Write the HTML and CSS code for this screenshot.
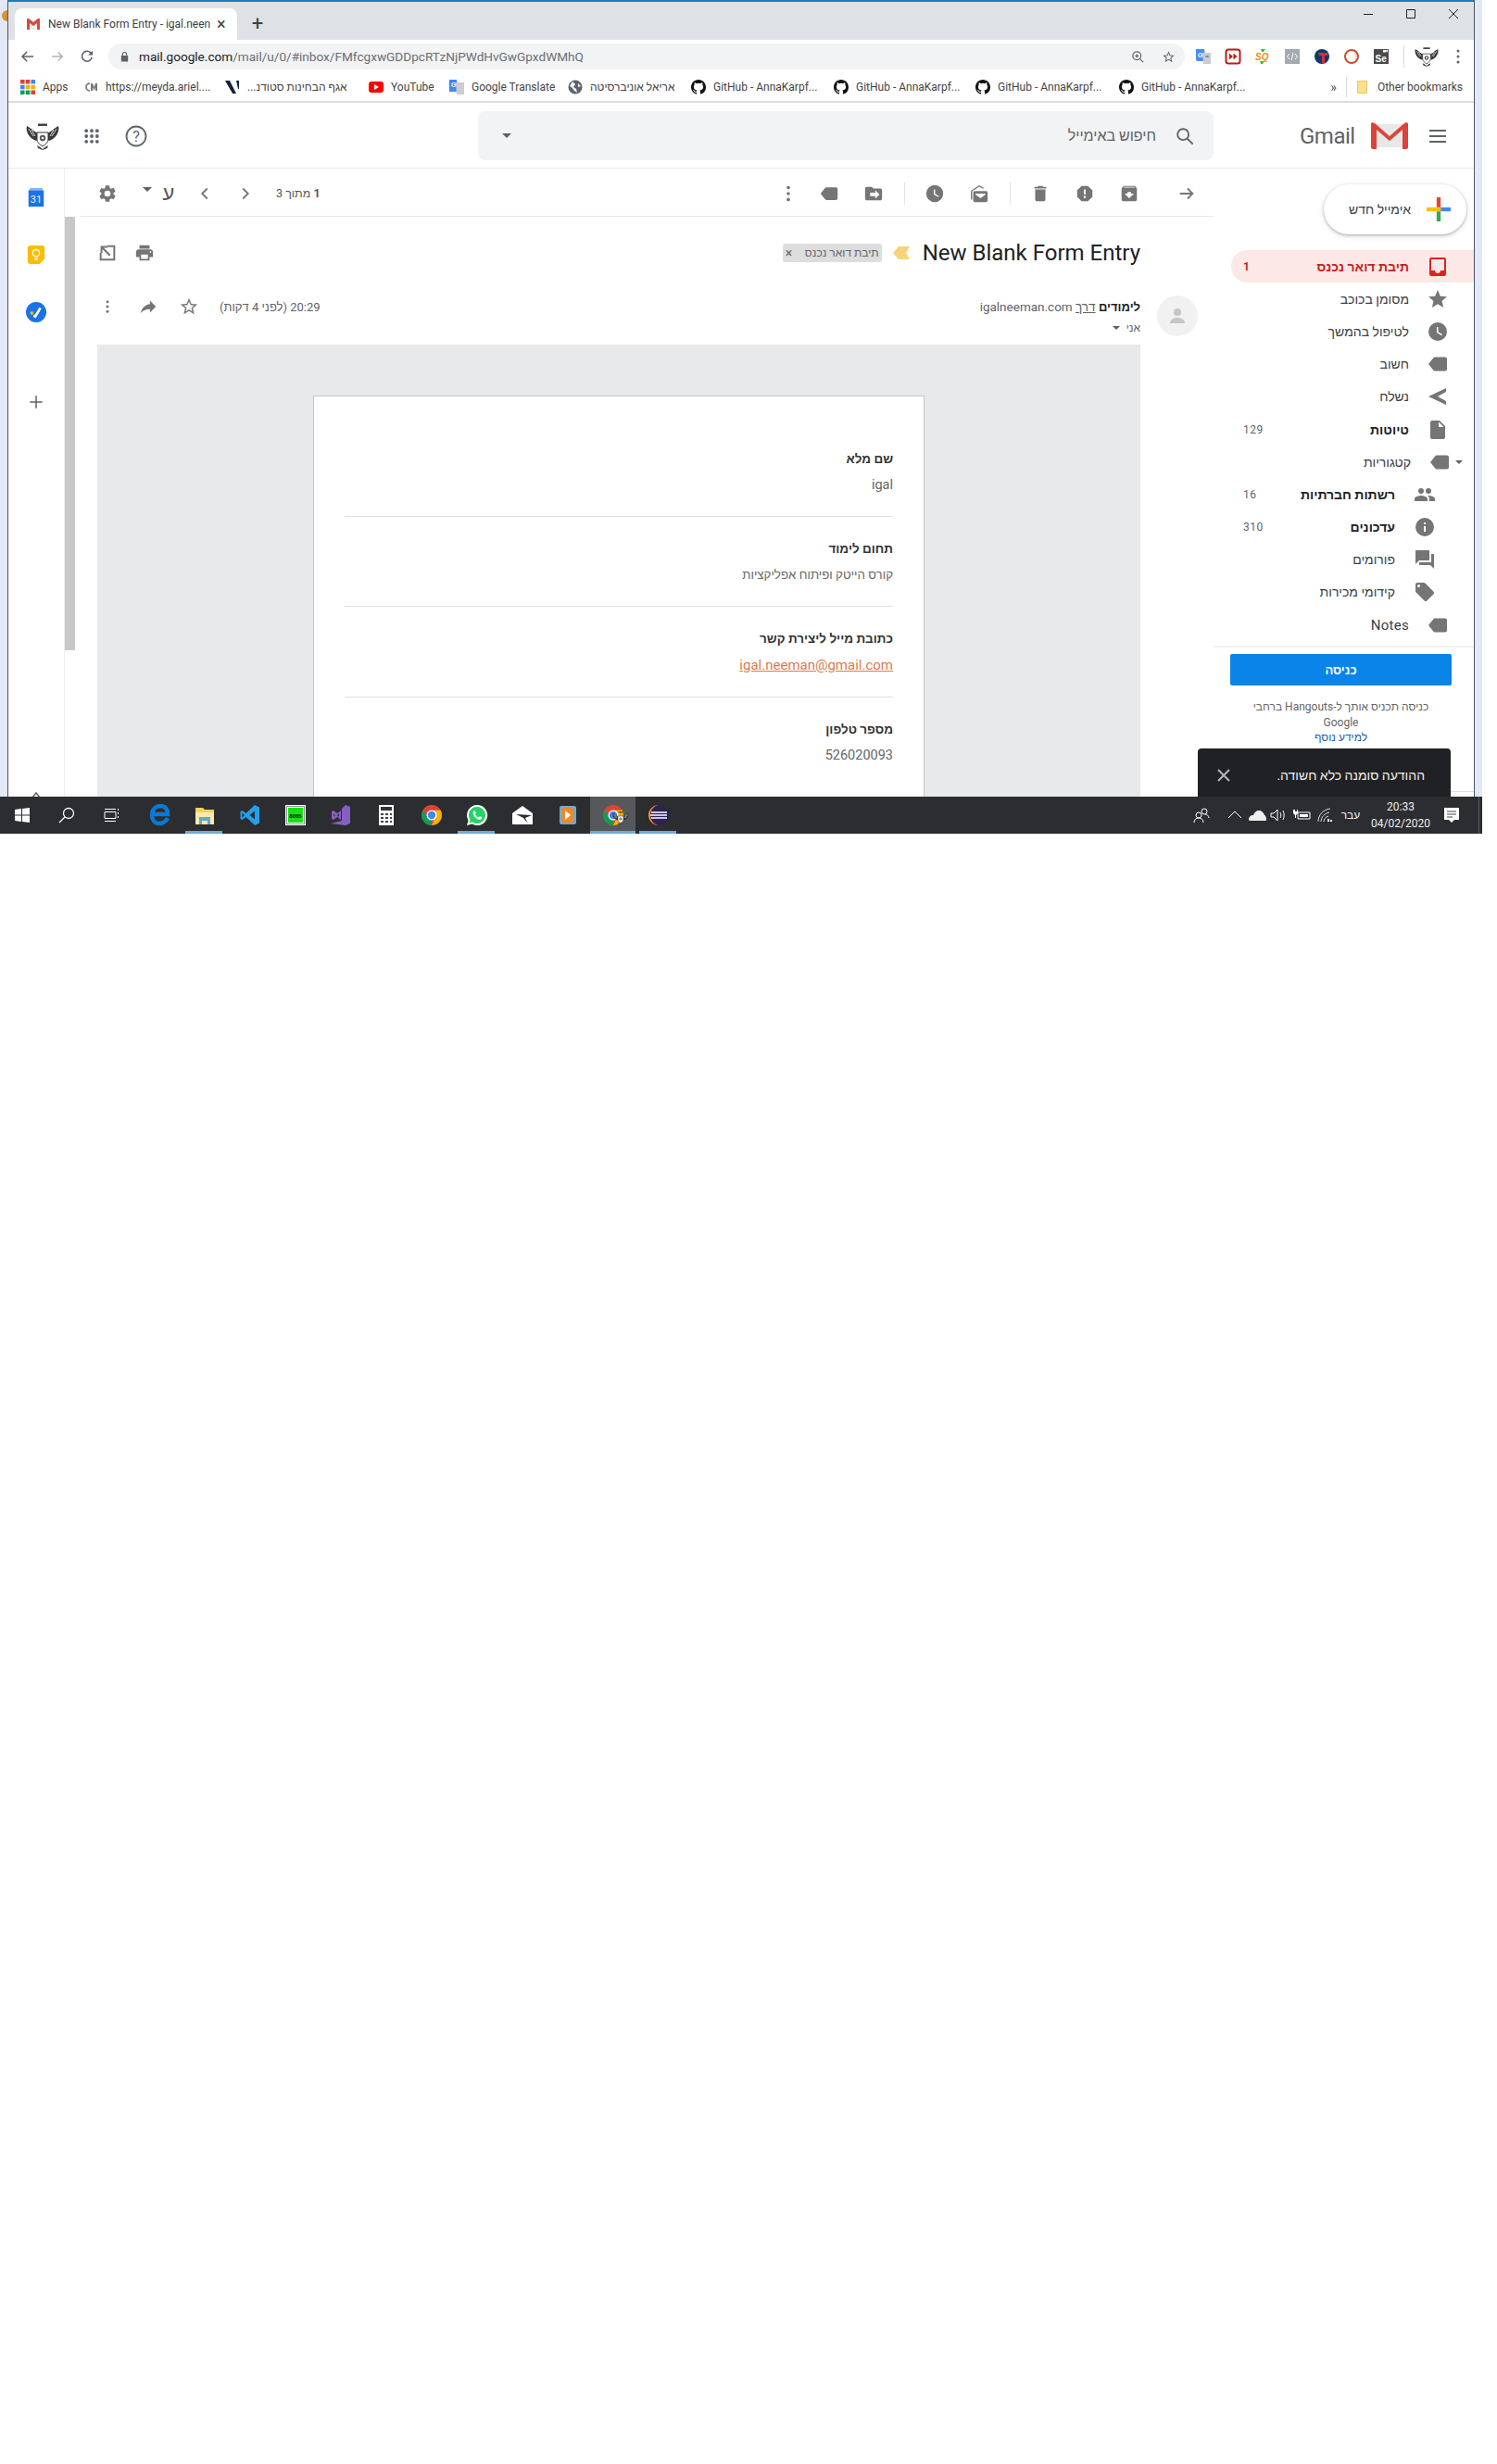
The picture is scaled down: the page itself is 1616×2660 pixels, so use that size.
FILE: index.html
```html
<!DOCTYPE html>
<html lang="he">
<head>
<meta charset="utf-8">
<title>New Blank Form Entry</title>
<link rel="stylesheet" href="styles.css">
</head>
<body>
<svg class="defs" width="0" height="0">
  <symbol id="i-gear" viewBox="0 0 24 24"><path fill="currentColor" d="M19.14 12.94c.04-.3.06-.61.06-.94s-.02-.64-.07-.94l2.03-1.58a.49.49 0 0 0 .12-.61l-1.92-3.32a.49.49 0 0 0-.59-.22l-2.39.96a7 7 0 0 0-1.62-.94l-.36-2.54a.48.48 0 0 0-.48-.41h-3.84c-.24 0-.43.17-.47.41l-.36 2.54c-.59.24-1.13.57-1.62.94l-2.39-.96a.49.49 0 0 0-.59.22L2.74 8.87c-.12.21-.08.47.12.61l2.03 1.58c-.05.3-.09.63-.09.94s.02.64.07.94l-2.03 1.58a.49.49 0 0 0-.12.61l1.92 3.32c.12.22.37.29.59.22l2.39-.96c.5.38 1.03.7 1.62.94l.36 2.54c.05.24.24.41.48.41h3.84c.24 0 .44-.17.47-.41l.36-2.54c.59-.24 1.13-.56 1.62-.94l2.39.96c.22.08.47 0 .59-.22l1.92-3.32a.48.48 0 0 0-.12-.61l-2.01-1.58zM12 15.6a3.6 3.6 0 1 1 0-7.2 3.6 3.6 0 0 1 0 7.2z"/></symbol>
  <symbol id="i-label" viewBox="0 0 24 24"><path fill="currentColor" d="M2 12 7.200 5.400c.4-.5 1-.9 1.700-.9H20c1.100 0 2 .9 2 2v11c0 1.100-.9 2-2 2H8.900c-.7 0-1.300-.4-1.700-.9z"/></symbol>
  <symbol id="i-folder" viewBox="0 0 24 24"><path fill="currentColor" d="M20 6h-8l-2-2H4c-1.100 0-2 .9-2 2v12c0 1.100.9 2 2 2h16c1.100 0 2-.9 2-2V8c0-1.100-.9-2-2-2zm-6 12v-3H8v-4h6V8l5 5z"/></symbol>
  <symbol id="i-clock" viewBox="0 0 24 24"><path fill="currentColor" d="M12 2a10 10 0 1 0 0 20 10 10 0 0 0 0-20zm4.200 14.200L11 13V7h1.500v5.200l4.500 2.700z"/></symbol>
  <symbol id="i-mailopen" viewBox="0 0 24 24"><path fill="none" stroke="currentColor" stroke-width="1.500" d="M3 9 12 3l5 2.500M3 9v10"/><path fill="currentColor" d="M7 9h13c1.100 0 2 .9 2 2v9c0 1.100-.9 2-2 2H7c-1.100 0-2-.9-2-2v-9c0-1.100.9-2 2-2zm1 3 5.500 4.500L19 12"/><path fill="none" stroke="#fff" stroke-width="1.600" d="m8 12.500 5.500 4 5.500-4"/></symbol>
  <symbol id="i-trash" viewBox="0 0 24 24"><path fill="currentColor" d="M6 19c0 1.100.9 2 2 2h8c1.100 0 2-.9 2-2V7H6v12zM19 4h-3.500l-1-1h-5l-1 1H5v2h14V4z"/></symbol>
  <symbol id="i-spam" viewBox="0 0 24 24"><path fill="currentColor" d="M15.730 3H8.270L3 8.270v7.460L8.270 21h7.460L21 15.730V8.270L15.730 3zM12 17.300c-.72 0-1.300-.58-1.300-1.300 0-.72.58-1.300 1.300-1.300.72 0 1.300.58 1.300 1.300 0 .72-.58 1.300-1.300 1.300zm1-4.300h-2V7h2v6z"/></symbol>
  <symbol id="i-archive" viewBox="0 0 24 24"><path fill="currentColor" d="M20.540 5.230l-1.390-1.680C18.880 3.210 18.470 3 18 3H6c-.47 0-.88.21-1.160.55L3.460 5.230C3.170 5.570 3 6.020 3 6.500V19c0 1.100.9 2 2 2h14c1.100 0 2-.9 2-2V6.500c0-.48-.17-.93-.46-1.270zM12 17.500 6.500 12H10v-2h4v2h3.500L12 17.500zM5.120 5l.81-1h12l.94 1H5.120z"/></symbol>
  <symbol id="i-arrow" viewBox="0 0 24 24"><path fill="none" stroke="currentColor" stroke-width="2" d="M4 12h15M13 6l6 6-6 6"/></symbol>
  <symbol id="i-back" viewBox="0 0 24 24"><path fill="none" stroke="currentColor" stroke-width="2" d="M20 12H5M11 5l-7 7 7 7"/></symbol>
  <symbol id="i-expand" viewBox="0 0 24 24"><path fill="none" stroke="currentColor" stroke-width="2.200" d="M12 4h8v16H4v-8M5 5l10 10M5 12V5h7"/></symbol>
  <symbol id="i-print" viewBox="0 0 24 24"><path fill="currentColor" d="M19 8H5c-1.660 0-3 1.340-3 3v6h4v4h12v-4h4v-6c0-1.660-1.340-3-3-3zm-3 11H8v-5h8v5zm3-7c-.55 0-1-.45-1-1s.45-1 1-1 1 .45 1 1-.45 1-1 1zm-1-9H6v4h12V3z"/></symbol>
  <symbol id="i-forward" viewBox="0 0 24 24"><path fill="currentColor" d="M14 9V5l7 7-7 7v-4.100c-5 0-8.500 1.600-11 5.100 1-5 4-10 11-11z"/></symbol>
  <symbol id="i-staro" viewBox="0 0 24 24"><path fill="currentColor" d="M22 9.240l-7.190-.62L12 2 9.190 8.630 2 9.240l5.460 4.730L5.820 21 12 17.270 18.180 21l-1.630-7.030L22 9.240zM12 15.400l-3.760 2.270 1-4.280-3.320-2.880 4.380-.38L12 6.100l1.710 4.040 4.380.38-3.320 2.880 1 4.280L12 15.400z"/></symbol>
  <symbol id="i-star" viewBox="0 0 24 24"><path fill="currentColor" d="M12 17.270 18.180 21l-1.640-7.030L22 9.240l-7.190-.61L12 2 9.190 8.630 2 9.240l5.460 4.730L5.820 21z"/></symbol>
  <symbol id="i-inbox" viewBox="0 0 24 24"><path fill="currentColor" d="M19 2H5C3.900 2 3 2.900 3 4v16c0 1.100.9 2 2 2h14c1.100 0 2-.9 2-2V4c0-1.100-.9-2-2-2zm0 14h-4c0 1.700-1.300 3-3 3s-3-1.300-3-3H5V4h14z"/></symbol>
  <symbol id="i-send" viewBox="0 0 24 24"><path fill="currentColor" d="M21 3 2 12l19 9v-4l-9-5 9-5z"/></symbol>
  <symbol id="i-doc" viewBox="0 0 24 24"><path fill="currentColor" d="M6 2C4.900 2 4 2.900 4 4v16c0 1.100.9 2 2 2h12c1.100 0 2-.9 2-2V8l-6-6zm7 7V3.500L18.500 9z"/></symbol>
  <symbol id="i-people" viewBox="0 0 24 24"><path fill="currentColor" d="M16 11a3 3 0 1 0 0-6 3 3 0 0 0 0 6zm-8 0a3 3 0 1 0 0-6 3 3 0 0 0 0 6zm0 2c-2.330 0-7 1.170-7 3.500V19h14v-2.500C15 14.170 10.330 13 8 13zm8 0c-.29 0-.62.02-.97.05 1.160.84 1.970 1.970 1.970 3.450V19h6v-2.500c0-2.330-4.670-3.500-7-3.500z"/></symbol>
  <symbol id="i-info" viewBox="0 0 24 24"><path fill="currentColor" d="M12 2a10 10 0 1 0 0 20 10 10 0 0 0 0-20zm1 15h-2v-6h2zm0-8h-2V7h2z"/></symbol>
  <symbol id="i-forum" viewBox="0 0 24 24"><path fill="currentColor" d="M21 6h-2v9H6v2c0 .55.45 1 1 1h11l4 4V7c0-.55-.45-1-1-1zm-4 6V3c0-.55-.45-1-1-1H3c-.55 0-1 .45-1 1v14l4-4h10c.55 0 1-.45 1-1z"/></symbol>
  <symbol id="i-tag" viewBox="0 0 24 24"><path fill="currentColor" d="m21.410 11.580-9-9C12.050 2.220 11.550 2 11 2H4c-1.100 0-2 .9-2 2v7c0 .55.22 1.050.59 1.420l9 9c.36.36.86.58 1.410.58s1.050-.22 1.410-.59l7-7c.37-.36.59-.86.59-1.410s-.23-1.060-.59-1.420zM5.500 7a1.500 1.500 0 1 1 0-3 1.500 1.500 0 0 1 0 3z"/></symbol>
  <symbol id="i-github" viewBox="0 0 16 16"><path fill="currentColor" d="M8 0C3.580 0 0 3.580 0 8c0 3.540 2.290 6.530 5.470 7.590.4.07.55-.17.55-.38 0-.19-.01-.82-.01-1.490-2.010.37-2.530-.49-2.690-.94-.09-.23-.48-.94-.82-1.130-.28-.15-.68-.52-.01-.53.63-.01 1.080.58 1.230.82.72 1.210 1.870.87 2.330.66.07-.52.28-.87.51-1.070-1.780-.2-3.640-.89-3.640-3.950 0-.87.31-1.590.82-2.150-.08-.2-.36-1.020.08-2.120 0 0 .67-.21 2.200.82a7.420 7.420 0 0 1 4 0c1.530-1.040 2.200-.82 2.200-.82.44 1.100.16 1.920.08 2.120.51.56.82 1.270.82 2.150 0 3.070-1.870 3.750-3.650 3.950.29.25.54.73.54 1.480 0 1.070-.01 1.930-.01 2.200 0 .21.15.46.55.38A8.010 8.010 0 0 0 16 8c0-4.420-3.580-8-8-8z"/></symbol>
  <symbol id="i-wings" viewBox="0 0 36 30">
    <path fill="#3a3a3a" d="M1 4c2 1 5 3 7 5l5 3 1 6-3 2c-3-1-6-3-8-6C1 11 0 7 1 4zM35 4c-2 1-5 3-7 5l-5 3-1 6 3 2c3-1 6-3 8-6 2-3 3-7 2-10z"/>
    <path fill="none" stroke="#fff" stroke-width=".8" d="m3 7 5 8M6 8l4 7M33 7l-5 8M30 8l-4 7"/>
    <path fill="#fff" stroke="#333" d="M12 11h12v7c0 4-3 6-6 8-3-2-6-4-6-8z"/>
    <circle cx="18" cy="17" r="3.200" fill="#555"/><circle cx="18" cy="17" r="1.300" fill="#fff"/>
    <path fill="#444" d="M13 1.500h10v2.500H13zM12 25l3 1.500 3 2.500 3-2.500 3-1.500-1 3-5 2-5-2z"/>
  </symbol>
  <symbol id="i-chrome" viewBox="0 0 24 24"><circle cx="12" cy="12" r="11" fill="#db4437"/><path fill="#0f9d58" d="M12 23A11 11 0 0 1 2.500 6.500L8 15l4 2z"/><path fill="#f4b400" d="M12 23a11 11 0 0 0 9.500-16.500L12 7l4 7z"/><circle cx="12" cy="12" r="5.500" fill="#fff"/><circle cx="12" cy="12" r="4.200" fill="#4285f4"/></symbol>
</svg>

<div class="screen">
  <div class="desk">
    <span class="desk-dot"></span>
    <div class="window">
      <div class="tabstrip">
        <div class="tab">
          <svg class="favicon" viewBox="0 0 16 16"><path fill="#eee" d="M1 3h14v11H1z"/><path fill="#d54b3d" d="M1 2h2l5 4 5-4h2v12h-3V7L8 10 4 7v7H1z"/></svg>
          <span class="tab-title">New Blank Form Entry - igal.neen</span>
          <span class="tab-x">×</span>
        </div>
        <span class="tab-new">+</span>
        <div class="winctl">
          <svg viewBox="0 0 12 12"><path stroke="#222" d="M1 6.500h10"/></svg>
          <svg viewBox="0 0 12 12"><path fill="none" stroke="#222" d="M1.500 1.500h9v9h-9z"/></svg>
          <svg viewBox="0 0 12 12"><path stroke="#222" d="m1 1 10 10M11 1 1 11"/></svg>
        </div>
      </div>

      <div class="navbar">
        <svg class="nav-ic"><use href="#i-back"/></svg>
        <svg class="nav-ic fwd"><use href="#i-arrow"/></svg>
        <svg class="nav-ic" viewBox="0 0 24 24"><path fill="none" stroke="currentColor" stroke-width="2" d="M19 13a7.200 7.200 0 1 1-2-6.500L20 9"/><path fill="currentColor" d="M20 3.500V10h-6.500z"/></svg>
        <div class="omni">
          <svg class="lock" viewBox="0 0 12 12"><path fill="#5f6368" d="M3 5V3.500a3 3 0 0 1 6 0V5h1v7H2V5zm1.200 0h3.600V3.500a1.800 1.800 0 0 0-3.600 0z"/></svg>
          <span class="url"><b>mail.google.com</b>/mail/u/0/#inbox/FMfcgxwGDDpcRTzNjPWdHvGwGpxdWMhQ</span>
          <svg class="omni-ic" viewBox="0 0 24 24"><circle cx="10" cy="10" r="7" fill="none" stroke="currentColor" stroke-width="2"/><path stroke="currentColor" stroke-width="2" d="m15 15 6 6M7 10h6M10 7v6"/></svg>
          <svg class="omni-ic omni-star"><use href="#i-staro"/></svg>
        </div>
        <div class="exts">
          <svg viewBox="0 0 18 18"><path fill="#4a8af4" d="M1 1h9l2 13H3c-1 0-2-1-2-2z"/><path fill="#c9ccd1" d="M8 5h9v12H9z"/><text x="3" y="10" class="ext-t" fill="#fff">G</text><path stroke="#666" d="M11 9h4M13 8v1"/></svg>
          <svg viewBox="0 0 18 18"><rect x="1.500" y="1.500" width="15" height="15" rx="2.500" fill="#fff" stroke="#b71c1c" stroke-width="2"/><path fill="#b71c1c" d="m5 5.500 4 3.500-4 3.500zm4.500 0 4 3.500-4 3.500z"/></svg>
          <svg viewBox="0 0 18 18"><path fill="#4caf50" d="M7 1h5l-2 3H8zM6 14h5l-2 3H7z"/><text x="1" y="13" class="ext-b" fill="#ef8a1d">SQ</text></svg>
          <svg viewBox="0 0 18 18"><rect x="1" y="1" width="16" height="16" fill="#a4aab2"/><path fill="none" stroke="#fff" d="M6 6 3.500 9 6 12M12 6l2.500 3-2.500 3M10 5 8 13"/></svg>
          <svg viewBox="0 0 18 18"><circle cx="9" cy="9" r="8" fill="#0d3b66"/><path fill="#e0274a" d="M5 5h11l-1 3h-3v8H9V8H6z"/></svg>
          <svg viewBox="0 0 18 18"><circle cx="9" cy="9" r="7" fill="none" stroke="#c8502a" stroke-width="2"/><path fill="none" stroke="#e9c3ae" d="M12 5a5 5 0 0 1 1 7"/></svg>
          <svg viewBox="0 0 18 18"><rect x="1" y="1" width="16" height="16" fill="#4a4a4a"/><path fill="#fff" d="M11 2h3v2.500h-3zM14 2.500l2-1v3l-2-1z"/><text x="2.500" y="15" class="ext-se" fill="#fff">Se</text></svg>
          <span class="ext-sep"></span>
          <svg class="ext-me"><use href="#i-wings"/></svg>
          <svg class="ext-dots" viewBox="0 0 4 16"><circle cx="2" cy="2" r="1.500"/><circle cx="2" cy="8" r="1.500"/><circle cx="2" cy="14" r="1.500"/></svg>
        </div>
      </div>

      <div class="bookmarks">
        <div class="bm-grid">
          <span class="bm"><svg class="bm-ic" viewBox="0 0 14 14"><path fill="#db4437" d="M0 0h4v4H0zM5 0h4v4H5z"/><path fill="#4285f4" d="M10 0h4v4h-4zM0 5h4v4H0z"/><path fill="#f4b400" d="M5 5h4v4H5zM10 5h4v4h-4z"/><path fill="#0f9d58" d="M0 10h4v4H0zM5 10h4v4H5z"/><path fill="#db4437" d="M10 10h4v4h-4z"/></svg>Apps</span>
          <span class="bm"><svg class="bm-ic" viewBox="0 0 16 16"><path fill="none" stroke="#888" stroke-width="2" d="M7 4a4 4 0 1 0 0 8"/><path fill="#777" d="M8 4h2l1.500 4L13 4h2v8h-2V8l-1.500 4L10 8v4H8z"/></svg>https://meyda.ariel....</span>
          <span class="bm"><svg class="bm-ic" viewBox="0 0 16 16"><path fill="#16233f" d="M0 1h5l7 14H8z"/><path fill="#16233f" d="M12 1h3v9h-1z"/></svg><span dir="rtl">אגף הבחינות סטודנ...</span></span>
          <span class="bm"><svg class="bm-ic" viewBox="0 0 16 16"><rect y="2" width="16" height="12" rx="3" fill="#f00"/><path fill="#fff" d="m6 5 5 3-5 3z"/></svg>YouTube</span>
          <span class="bm"><svg class="bm-ic" viewBox="0 0 16 16"><path fill="#4285f4" d="M0 0h8l2 13H0z"/><path fill="#ccc" d="M7 3h9v13H8z"/><text x="2" y="8" class="ext-t" fill="#fff">G</text></svg>Google Translate</span>
          <span class="bm"><svg class="bm-ic" viewBox="0 0 16 16"><circle cx="8" cy="8" r="7.500" fill="#5f6368"/><path fill="#fff" d="M5 2 8 5 6 8l3 2 1 4-3-2-3-4-2-1zM11 4l3 3-3 1z"/></svg><span dir="rtl">אריאל אוניברסיטה</span></span>
          <span class="bm"><svg class="bm-ic gh"><use href="#i-github"/></svg>GitHub - AnnaKarpf...</span>
          <span class="bm"><svg class="bm-ic gh"><use href="#i-github"/></svg>GitHub - AnnaKarpf...</span>
          <span class="bm"><svg class="bm-ic gh"><use href="#i-github"/></svg>GitHub - AnnaKarpf...</span>
          <span class="bm"><svg class="bm-ic gh"><use href="#i-github"/></svg>GitHub - AnnaKarpf...</span>
        </div>
        <div class="bm-end">
          <span class="bm-more">»</span>
          <span class="bm-sep"></span>
          <span class="bm"><svg class="bm-ic" viewBox="0 0 16 16"><path fill="#fbe08f" stroke="#e8c766" d="M2.500 1.500h10v13h-10z"/></svg>Other bookmarks</span>
        </div>
      </div>

      <header class="gm-head">
        <svg class="gm-avatar"><use href="#i-wings"/></svg>
        <svg class="gm-apps" viewBox="0 0 24 24" fill="#5f6368"><circle cx="5" cy="5" r="2.300"/><circle cx="12" cy="5" r="2.300"/><circle cx="19" cy="5" r="2.300"/><circle cx="5" cy="12" r="2.300"/><circle cx="12" cy="12" r="2.300"/><circle cx="19" cy="12" r="2.300"/><circle cx="5" cy="19" r="2.300"/><circle cx="12" cy="19" r="2.300"/><circle cx="19" cy="19" r="2.300"/></svg>
        <svg class="gm-help" viewBox="0 0 24 24"><circle cx="12" cy="12" r="10.500" fill="none" stroke="#5f6368" stroke-width="1.800"/><text x="12" y="17.500" text-anchor="middle" class="help-q" fill="#5f6368">?</text></svg>
        <div class="search">
          <span class="caret search-caret"></span>
          <span class="search-text" dir="rtl">חיפוש באימייל</span>
          <svg class="search-ic" viewBox="0 0 24 24"><circle cx="10" cy="10" r="6.500" fill="none" stroke="#5f6368" stroke-width="2"/><path stroke="#5f6368" stroke-width="2" d="m15 15 6.500 6.500"/></svg>
        </div>
        <span class="gm-word">Gmail</span>
        <svg class="gm-m" viewBox="0 0 40 29"><path fill="#e8e8e8" d="M3 2h34v25H3z"/><path fill="#d9d9d9" d="m3 2 17 15L37 2v4L20 21 3 6z"/><path fill="#db4437" d="M0 2c0-2 2-2.500 4-1l16 14L36 1c2-1.500 4-1 4 1v25c0 1-1 2-2 2h-4V8L20 20 6 8v21H2c-1 0-2-1-2-2z"/></svg>
        <svg class="gm-menu" viewBox="0 0 24 24"><path stroke="#5f6368" stroke-width="2" d="M3 6h18M3 12h18M3 18h18"/></svg>
      </header>

      <main class="gm-main">
        <nav class="rail">
          <svg class="rail-ic" viewBox="0 0 24 24"><path fill="#8ab4f8" d="M5 1h14l2 4H3z"/><rect x="3" y="4" width="18" height="19" fill="#1a73e8"/><text x="12" y="19" text-anchor="middle" class="cal-t" fill="#e8f0fe">31</text></svg>
          <svg class="rail-ic" viewBox="0 0 24 24"><path fill="#fbbc04" d="M5 1h14c1.500 0 3 1 3 3v13l-6 6H5c-1.500 0-3-1-3-3V4c0-2 1.500-3 3-3z"/><circle cx="12" cy="10" r="4" fill="none" stroke="#fff" stroke-width="1.500"/><path stroke="#fff" stroke-width="2" d="M10 17h4"/></svg>
          <svg class="rail-ic" viewBox="0 0 24 24"><circle cx="12" cy="12" r="12" fill="#1a73e8"/><path fill="none" stroke="#fff" stroke-width="3" d="m9 16 2 1 6-10"/><circle cx="7" cy="13" r="2" fill="#fbbc04"/></svg>
          <span class="rail-sep"></span>
          <svg class="rail-plus" viewBox="0 0 24 24"><path stroke="#5f6368" stroke-width="2" d="M12 3v18M3 12h18"/></svg>
          <svg class="rail-more" viewBox="0 0 12 12"><path fill="none" stroke="#5f6368" stroke-width="1.500" d="m2 9 4-5 4 5"/></svg>
        </nav>

        <section class="center">
          <div class="toolbar">
            <div class="tb-left">
              <svg class="ic"><use href="#i-gear"/></svg>
              <span class="caret tb-caret"></span>
              <span class="tb-lang" dir="rtl">ע</span>
              <svg class="ic tb-prev" viewBox="0 0 24 24"><path fill="none" stroke="currentColor" stroke-width="2" d="m15 6-6 6 6 6"/></svg>
              <svg class="ic tb-next" viewBox="0 0 24 24"><path fill="none" stroke="currentColor" stroke-width="2" d="m9 6 6 6-6 6"/></svg>
              <span class="tb-count" dir="rtl"><b>1</b> מתוך 3</span>
            </div>
            <div class="tb-right">
              <svg class="ic" viewBox="0 0 24 24"><circle cx="12" cy="5" r="2"/><circle cx="12" cy="12" r="2"/><circle cx="12" cy="19" r="2"/></svg>
              <svg class="ic"><use href="#i-label"/></svg>
              <svg class="ic tb-wide"><use href="#i-folder"/></svg>
              <span class="tb-sep"></span>
              <svg class="ic"><use href="#i-clock"/></svg>
              <svg class="ic tb-wide"><use href="#i-mailopen"/></svg>
              <span class="tb-sep"></span>
              <svg class="ic"><use href="#i-trash"/></svg>
              <svg class="ic tb-wide"><use href="#i-spam"/></svg>
              <svg class="ic tb-wide"><use href="#i-archive"/></svg>
              <svg class="ic tb-arrow"><use href="#i-arrow"/></svg>
            </div>
          </div>

          <div class="thread-wrap">
            <div class="scrollbar"></div>
            <div class="thread">
              <div class="subject">
                <div class="subject-tools">
                  <svg class="ic"><use href="#i-expand"/></svg>
                  <svg class="ic"><use href="#i-print"/></svg>
                </div>
                <div class="subject-main">
                  <span class="badge" dir="rtl">תיבת דואר נכנס<i>×</i></span>
                  <svg class="marker" viewBox="0 0 18 14"><path fill="#f6d477" d="M0 7 5 1c.5-.6 1-1 2-1h11l-4 7 4 7H7c-1 0-1.500-.4-2-1z"/></svg>
                  <h1 class="title">New Blank Form Entry</h1>
                </div>
              </div>

              <div class="message">
                <div class="msg-body">
                  <div class="msg-head">
                    <div class="msg-actions">
                      <svg class="ic-sm" viewBox="0 0 24 24"><circle cx="12" cy="5" r="2"/><circle cx="12" cy="12" r="2"/><circle cx="12" cy="19" r="2"/></svg>
                      <svg class="ic act-reply"><use href="#i-forward"/></svg>
                      <svg class="ic act-star"><use href="#i-staro"/></svg>
                      <span class="msg-time" dir="rtl">20:29 (לפני 4 דקות)</span>
                    </div>
                    <div class="msg-from">
                      <div class="from-line" dir="rtl"><b>לימודים</b> <u>דרך</u> igalneeman.com</div>
                      <div class="to-line"><span class="caret to-caret"></span> <span dir="rtl">אני</span></div>
                    </div>
                  </div>
                  <div class="mail-bg">
                    <div class="card" dir="rtl">
                      <div class="field"><div class="f-label">שם מלא</div><div class="f-value">igal</div></div>
                      <div class="field"><div class="f-label">תחום לימוד</div><div class="f-value he">קורס הייטק ופיתוח אפליקציות</div></div>
                      <div class="field"><div class="f-label">כתובת מייל ליצירת קשר</div><div class="f-value"><a class="f-link" href="#">igal.neeman@gmail.com</a></div></div>
                      <div class="field"><div class="f-label">מספר טלפון</div><div class="f-value">526020093</div></div>
                    </div>
                  </div>
                </div>
                <div class="avatar"><svg viewBox="0 0 24 24"><circle cx="12" cy="8" r="4" fill="#c4c6c8"/><path fill="#c4c6c8" d="M4 20c0-4 4-6 8-6s8 2 8 6z"/></svg></div>
              </div>
            </div>
          </div>
        </section>

        <aside class="side">
          <button class="compose"><span class="compose-text" dir="rtl">אימייל חדש</span>
            <svg class="compose-plus" viewBox="0 0 36 36"><path fill="#ea4335" d="M15 0h6v15h-6z"/><path fill="#34a853" d="M15 21h6v15h-6z"/><path fill="#fbbc04" d="M0 15h15v6H0z"/><path fill="#4285f4" d="M21 15h15v6H21z"/><path fill="#fbbc04" d="M15 15h6v6h-6z"/></svg>
          </button>
          <ul class="navlist">
            <li class="row active"><span class="cnt">1</span><span class="txt" dir="rtl">תיבת דואר נכנס</span><svg class="row-ic"><use href="#i-inbox"/></svg></li>
            <li class="row"><span class="txt" dir="rtl">מסומן בכוכב</span><svg class="row-ic"><use href="#i-star"/></svg></li>
            <li class="row"><span class="txt" dir="rtl">לטיפול בהמשך</span><svg class="row-ic"><use href="#i-clock"/></svg></li>
            <li class="row"><span class="txt" dir="rtl">חשוב</span><svg class="row-ic"><use href="#i-label"/></svg></li>
            <li class="row"><span class="txt" dir="rtl">נשלח</span><svg class="row-ic"><use href="#i-send"/></svg></li>
            <li class="row bold"><span class="cnt">129</span><span class="txt" dir="rtl">טיוטות</span><svg class="row-ic"><use href="#i-doc"/></svg></li>
            <li class="row cat"><span class="txt" dir="rtl">קטגוריות</span><svg class="row-ic"><use href="#i-label"/></svg><span class="caret cat-caret"></span></li>
            <li class="row sub bold"><span class="cnt">16</span><span class="txt" dir="rtl">רשתות חברתיות</span><svg class="row-ic"><use href="#i-people"/></svg></li>
            <li class="row sub bold"><span class="cnt">310</span><span class="txt" dir="rtl">עדכונים</span><svg class="row-ic"><use href="#i-info"/></svg></li>
            <li class="row sub"><span class="txt" dir="rtl">פורומים</span><svg class="row-ic"><use href="#i-forum"/></svg></li>
            <li class="row sub"><span class="txt" dir="rtl">קידומי מכירות</span><svg class="row-ic"><use href="#i-tag"/></svg></li>
            <li class="row"><span class="txt txt-notes">Notes</span><svg class="row-ic"><use href="#i-label"/></svg></li>
          </ul>
          <div class="side-div"></div>
          <div class="hangouts">
            <button class="signin" dir="rtl">כניסה</button>
            <p class="hang-text" dir="rtl">כניסה תכניס אותך ל-Hangouts ברחבי<br>Google<br><a href="#">למידע נוסף</a></p>
          </div>
          <div class="toast">
            <svg class="toast-x" viewBox="0 0 14 14"><path stroke="#b5b7ba" stroke-width="2" d="m1 1 12 12M13 1 1 13"/></svg>
            <span class="toast-text" dir="rtl">ההודעה סומנה כלא חשודה.</span>
          </div>
        </aside>
      </main>
    </div>
  </div>

  <footer class="taskbar">
    <div class="tb-sys">
      <svg viewBox="0 0 20 20"><path fill="#fff" d="M2 4l7-1v6.500H2zM10 3l8-1v7.500h-8zM2 10.500h7V17l-7-1zM10 10.500h8V18l-8-1z"/></svg>
      <svg viewBox="0 0 20 20"><circle cx="12" cy="8" r="5.500" fill="none" stroke="#fff" stroke-width="1.300"/><path stroke="#fff" stroke-width="1.300" d="M8 12 2 18"/></svg>
      <svg viewBox="0 0 20 20"><path fill="none" stroke="#fff" d="M3 6.500h12v7H3zM3 3.500h12M3 16.500h12M17.500 3v2M17.500 7v2M17.500 11v2"/></svg>
    </div>
    <div class="tb-apps">
      <span class="app"><svg viewBox="0 0 24 24"><path fill="none" stroke="#0a78d4" stroke-width="4.500" d="M21 15c-2 4-5 6-9 6-5 0-8-4-8-9 0-6 4-10 9-10 5 0 8 3 8 9H5"/></svg></span>
      <span class="app open"><svg viewBox="0 0 24 24"><path fill="#f5cf62" d="M2 4h8l2 2h10v16H2z"/><path fill="#fde9a8" d="M2 9h20v13H2z"/><path fill="#5fa9d6" d="M6 14h12v8h-3v-4H9v4H6z"/></svg></span>
      <span class="app"><svg viewBox="0 0 24 24"><path fill="#23a0e8" fill-rule="evenodd" d="M17 1l5 2.500v17L17 23l-9.500-9-4 3-2-1V8l2-1 4 3zm0 6.500L11.500 12l5.500 4.500zM3.500 9.500v5L6 12z"/></svg></span>
      <span class="app"><svg viewBox="0 0 24 24"><rect x="1" y="1" width="22" height="22" fill="#fff"/><rect x="4" y="4" width="16" height="16" fill="#18e018"/><path fill="none" stroke="#222" stroke-dasharray="1 1" d="M2.500 2.500h19v19h-19z"/><text x="12" y="14.500" text-anchor="middle" class="chip-t">8085</text></svg></span>
      <span class="app"><svg viewBox="0 0 24 24"><path fill="#865fc5" fill-rule="evenodd" d="M17 1l5 2v18l-5 2-16-2 12-3V5zM2 8l2-1 4 3 4-3v10l-4-3-4 3-2-1zm2 3v2l2-1zm6-1-2 2 2 2z"/></svg></span>
      <span class="app"><svg viewBox="0 0 24 24"><rect x="4" y="1" width="16" height="22" fill="#fff"/><rect x="6" y="3" width="12" height="4" fill="#333"/><path fill="#444" d="M6 10h3v2H6zM11 10h3v2h-3zM16 10h2v2h-2zM6 14h3v2H6zM11 14h3v2h-3zM16 14h2v2h-2zM6 18h3v2H6zM11 18h3v2h-3zM16 18h2v2h-2z"/></svg></span>
      <span class="app"><svg viewBox="0 0 24 24"><use href="#i-chrome"/></svg></span>
      <span class="app open"><svg viewBox="0 0 24 24"><path fill="#fff" d="M12 1a11 11 0 0 0-9.500 16.500L1 23l5.700-1.500A11 11 0 1 0 12 1z"/><path fill="#25d366" d="M12 3a9 9 0 0 0-7.500 14L3.500 20.500 7 19.500A9 9 0 1 0 12 3z"/><path fill="#fff" d="M9 7c-1 .5-2 2-1 4 1 3 4 5.500 6.500 6 1.500 0 3-1 3-2.500L15 13l-1.500 1.500c-1.500-.5-3-2-3.500-3.500l1-1.500z"/></svg></span>
      <span class="app"><svg viewBox="0 0 24 24"><path fill="#fff" d="M12 2 23 10v12H1V10z"/><path fill="#2b2d30" d="m5 11 17 1-7 3 3 6-5-6z"/></svg></span>
      <span class="app"><svg viewBox="0 0 24 24"><rect x="3" y="2" width="18" height="20" rx="2" fill="#6fa9d0"/><rect x="5" y="4" width="13" height="16" rx="2" fill="#f08a24"/><path fill="#fff" d="m9 7 6 5-6 5z"/></svg></span>
      <span class="app active"><svg class="app-chrome"><use href="#i-chrome"/></svg><svg class="app-badge"><use href="#i-wings"/></svg></span>
      <span class="app open"><svg viewBox="0 0 24 24"><circle cx="12" cy="12" r="11" fill="#2c2255"/><path fill="#f7941e" d="M12 1a11 11 0 0 0 0 22c-5-1-9-5-9-11S7 2 12 1z"/><path stroke="#fff" stroke-width="1.500" d="M4 9h17M3 12h18M4 15h17"/></svg></span>
    </div>
    <div class="tray">
      <svg viewBox="0 0 20 20"><circle cx="7" cy="10" r="3" fill="none" stroke="#fff"/><circle cx="13" cy="6" r="3" fill="none" stroke="#fff"/><path fill="none" stroke="#fff" d="M2 18c0-3 2-5 5-5s5 2 5 5M14 9c2 0 4 2 4 4"/></svg>
      <svg viewBox="0 0 20 20"><path fill="none" stroke="#fff" d="m3 13 7-7 7 7"/></svg>
      <svg viewBox="0 0 20 20"><path fill="#eee" d="M1 15c0-3 2-5 5-5 1-3 3-5 6-5s5 2 6 5c1 .5 2 2 2 5 0 1-1 1-2 1H3c-1 0-2-.2-2-1z"/></svg>
      <svg viewBox="0 0 20 20"><path fill="none" stroke="#fff" d="M2 8h3l4-4v12l-4-4H2zM12 7c1 2 1 4 0 6M15 5c1.500 3 1.500 7 0 10"/></svg>
      <svg viewBox="0 0 20 20"><path fill="none" stroke="#fff" d="M6 7h13v7H6z"/><path fill="#fff" d="M8 9h9v3H8zM1 4h2v2h2V4h1v4l-2 2v3H3v-3L1 8z"/></svg>
      <svg viewBox="0 0 20 20"><path fill="none" stroke="#ddd" d="M3 17c0-7 5-13 13-14M6 17c0-5 4-9 9-10M9 17c0-3 2-5 5-6"/><path fill="#fff" d="M13 14h2v3h-2zM16 15h2v2h-2z"/></svg>
      <span class="tray-lang" dir="rtl">עבר</span>
      <span class="clock">20:33<br>04/02/2020</span>
      <svg viewBox="0 0 20 20"><path fill="#fff" d="M2 2h16v13h-5l-3 3-3-3H2z"/><path stroke="#444" d="M5 6h10M5 9h10M5 12h6"/></svg>
    </div>
  </footer>
</div>
</body>
</html>
```

FILE: styles.css
```css
* { box-sizing: border-box; }
html, body { margin: 0; padding: 0; background: #fff; }
body { font-family: Roboto, "Liberation Sans", sans-serif; font-size: 14px; color: #202124; }
.defs { position: absolute; }
svg { display: block; flex: none; }
b { font-weight: 700; }
ul { list-style: none; margin: 0; padding: 0; }

.screen { width: 1600px; height: 900px; display: flex; flex-direction: column; overflow: hidden; }
.desk { flex: 1; min-height: 0; padding: 0 8px; background: #e3e8f6; position: relative; }
.desk-dot { position: absolute; left: 2px; top: 11px; width: 12px; height: 12px; border-radius: 50%; background: #d9932f; }

.window { height: 100%; position: relative; background: #fff; border: solid #4d5560; border-width: 0 1px; display: flex; flex-direction: column; }

/* tab strip */
.tabstrip { height: 43px; flex: none; background: #dee1e6; border-top: 2px solid #1a7dbd; display: flex; align-items: flex-end; padding-left: 7px; }
.tab { width: 240px; height: 34px; background: #fff; border-radius: 8px 8px 0 0; display: flex; align-items: center; padding-left: 12px; }
.favicon { width: 16px; height: 16px; }
.tab-title { width: 176px; margin-left: 8px; font-size: 12px; color: #3c4043; white-space: nowrap; overflow: hidden; }
.tab-x { margin-left: 6px; font-size: 18px; color: #444; line-height: 1; }
.tab-new { width: 24px; margin: 0 0 6px 10px; text-align: center; font-size: 22px; line-height: 22px; color: #3c4043; align-self: flex-end; }
.winctl { margin-left: auto; align-self: flex-start; display: flex; gap: 34px; padding: 7px 16px 0 0; }
.winctl svg { width: 12px; height: 12px; }

/* address bar */
.navbar { height: 36px; flex: none; display: flex; align-items: center; padding-left: 12px; }
.nav-ic { width: 18px; height: 18px; margin-right: 14px; color: #5f6368; }
.nav-ic.fwd { color: #b0b3b8; }
.omni { width: 1162px; height: 28px; border-radius: 14px; background: #f1f3f4; display: flex; align-items: center; padding-left: 12px; }
.lock { width: 11px; height: 12px; }
.url { margin-left: 10px; font-size: 13.6px; color: #6b6f73; flex: 1; white-space: nowrap; }
.url b { font-weight: 400; color: #202124; }
.omni-ic { width: 15px; height: 15px; margin-right: 18px; color: #5f6368; }
.omni-ic.omni-star { margin-right: 10px; }
.exts { display: flex; align-items: center; gap: 14px; margin-left: 11px; }
.exts svg { width: 18px; height: 18px; }
.exts .ext-me { width: 26px; height: 22px; margin-left: -1px; }
.exts .ext-dots { width: 4px; height: 16px; margin-left: 5px; fill: #5f6368; }
.ext-sep { width: 1px; height: 24px; background: #dadce0; margin-left: 1px; margin-right: -2px; }
.ext-t { font: 700 7px "Liberation Sans", sans-serif; }
.ext-b { font: italic 700 10px "Liberation Sans", sans-serif; }
.ext-se { font: 700 10px "Liberation Sans", sans-serif; }

/* bookmarks */
.bookmarks { height: 32px; flex: none; display: flex; align-items: center; justify-content: space-between; border-bottom: 2px solid #dadce0; padding: 0 12px 0 13px; }
.bm-grid { display: grid; grid-template-columns: 68px 153px 155px 87px 128px 133px 154px 153px 155px auto; align-items: center; }
.bm { display: flex; align-items: center; gap: 8px; font-size: 12px; color: #444; white-space: nowrap; }
.bm-ic { width: 16px; height: 16px; }
.bm-ic.gh { color: #111; }
.bm-end { display: flex; align-items: center; }
.bm-more { font-size: 14px; color: #555; }
.bm-sep { width: 1px; height: 22px; background: #dadce0; margin: 0 9px 0 10px; }

/* gmail header */
.gm-head { height: 71px; flex: none; display: flex; align-items: center; border-bottom: 1px solid #eaebec; padding: 1px 0 0 19px; }
.gm-avatar { width: 36px; height: 30px; }
.gm-apps { width: 20px; height: 20px; margin-left: 25px; }
.gm-help { width: 24px; height: 24px; margin-left: 26px; }
.help-q { font: 400 16px Roboto, sans-serif; }
.search { width: 794px; height: 53px; margin-left: 357px; border-radius: 8px; background: #f1f3f4; display: flex; align-items: center; padding: 0 20px 0 26px; }
.caret { display: block; width: 0; height: 0; border: solid transparent; border-width: 5px 5px 0; border-top-color: #5f6368; flex: none; }
.search-text { margin-left: auto; font-size: 16px; color: #5f6368; }
.search-ic { width: 22px; height: 22px; margin-left: 20px; }
.gm-word { margin-left: 93px; width: 64px; font-size: 24px; color: #5f6368; letter-spacing: -.5px; }
.gm-m { width: 40px; height: 29px; margin-left: 13px; }
.gm-menu { width: 24px; height: 24px; margin-left: 20px; }

/* main */
.gm-main { flex: 1; min-height: 0; display: flex; overflow: hidden; }
.rail { width: 61px; flex: none; border-right: 1px solid #eeeeee; display: flex; flex-direction: column; align-items: center; padding-top: 19px; gap: 38px; }
.rail-ic { width: 22px; height: 24px; }
.rail-sep { width: 24px; height: 1px; background: #cfd1d4; margin-top: -1px; }
.rail-plus { width: 18px; height: 18px; margin-top: 1px; }
.rail-more { width: 12px; height: 12px; margin-top: 371px; }
.cal-t { font: 400 12px Roboto, sans-serif; }

.center { width: 1240px; flex: none; display: flex; flex-direction: column; min-height: 0; }
.toolbar { height: 52px; flex: none; display: flex; align-items: center; justify-content: space-between; margin-left: 17px; border-bottom: 1px solid #e8e8e8; padding: 2px 17px 0 17px; color: #6b6b6b; }
.ic { width: 24px; height: 24px; padding: 1px; color: #757575; fill: #757575; flex: none; }
.ic-sm { width: 18px; height: 18px; fill: #757575; }
.tb-left, .tb-right { display: flex; align-items: center; }
.tb-caret { margin-left: 26px; margin-top: -8px; }
.tb-lang { width: 20px; margin-left: 8px; font-size: 22px; line-height: 24px; color: #555; text-align: center; }
.tb-prev { margin-left: 17px; }
.tb-next { margin-left: 20px; }
.tb-count { margin-left: 21px; font-size: 12.5px; color: #555; }
.tb-right { gap: 20px; }
.tb-wide { margin-left: 4px; }
.tb-arrow { margin-left: 18px; }
.tb-sep { width: 1px; height: 24px; margin-left: 1px; background: #e4e4e4; }

.thread-wrap { flex: 1; min-height: 0; display: flex; }
.scrollbar { width: 11px; height: 468px; flex: none; background: #c8c8c8; }
.thread { flex: 1; min-width: 0; padding-left: 24px; }

.subject { height: 78px; display: flex; align-items: center; justify-content: space-between; width: 1126px; }
.subject-tools { display: flex; gap: 16px; margin-left: -1px; }
.subject-main { display: flex; align-items: center; }
.badge { width: 107px; height: 20px; line-height: 20px; border-radius: 3px; background: #dddddd; font-size: 12px; color: #666; text-align: right; padding: 0 3px; display: flex; justify-content: space-between; }
.badge i { font-style: normal; font-size: 14px; }
.marker { width: 18px; height: 14px; margin-left: 12px; }
.title { margin: 0 0 0 14px; font-size: 24px; font-weight: 400; color: #202124; line-height: 30px; }

.message { display: flex; }
.msg-body { width: 1126px; flex: none; }
.msg-head { height: 60px; display: flex; justify-content: space-between; }
.msg-actions { display: flex; align-items: center; height: 38px; margin-left: 2px; color: #757575; }
.msg-actions .ic { width: 22px; height: 22px; padding: 0; }
.act-reply { margin-left: 24px; }
.act-star { margin-left: 22px; }
.msg-time { margin-left: 22px; font-size: 13px; color: #5f6368; }
.msg-from { text-align: right; }
.from-line { font-size: 13.5px; color: #5f6368; line-height: 38px; height: 38px; }
.from-line b { font-size: 13px; color: #202124; }
.to-line { display: flex; justify-content: flex-end; align-items: center; gap: 7px; font-size: 12px; color: #5f6368; line-height: 16px; margin-top: -4px; }
.to-caret { border-width: 4px 4px 0; }
.avatar { width: 44px; height: 44px; border-radius: 50%; background: #f1f1f1; margin: 7px 0 0 18px; padding: 10px; flex: none; }

.mail-bg { background: #e8e9eb; padding: 55px 0 0 233px; height: 600px; }
.card { width: 660px; height: 700px; background: #fff; border: 1px solid #c4c6c8; padding: 56px 33px 0; }
.field { padding-bottom: 22px; border-bottom: 1px solid #dedfe0; margin-bottom: 23px; }
.field:last-child { border-bottom: 0; }
.f-label { font-size: 13.5px; font-weight: 700; line-height: 22px; color: #333; }
.f-value { margin-top: 7px; font-size: 14.5px; line-height: 22px; color: #666; }
.f-value.he { font-size: 13.3px; }
.f-link { color: #e2784c; text-decoration: underline; font-size: 15px; }

/* sidebar */
.side { flex: 1; min-width: 0; padding-top: 17px; position: relative; }
.side::after { content: ""; position: absolute; right: 0; bottom: 5px; width: 25px; height: 1px; background: #dedfe0; }
.compose { width: 154px; height: 54px; margin-left: 119px; display: flex; align-items: center; background: #fff; border: 0; border-radius: 27px; box-shadow: 0 1px 3px rgba(60,64,67,.35), 0 2px 6px rgba(60,64,67,.15); padding: 0 17px 0 27px; font: inherit; }
.compose-text { font-size: 14px; color: #3c4043; white-space: nowrap; }
.compose-plus { width: 26px; height: 26px; margin-left: auto; }
.navlist { margin-top: 17px; }
.row { height: 35.2px; display: flex; align-items: center; justify-content: flex-end; padding-right: 27px; font-size: 14px; color: #3c4043; position: relative; }
.row .cnt { position: absolute; left: 32px; font-size: 12px; color: #5f6368; letter-spacing: .5px; font-weight: 400; }
.row .txt { white-space: nowrap; }
.row .txt-notes { font-size: 15px; letter-spacing: .3px; }
.row-ic { width: 24px; height: 24px; margin-left: 19px; color: #757575; }
.row.bold .txt { font-weight: 700; color: #202124; }
.row.active { margin-left: 19px; background: #fce8e6; border-radius: 18px 0 0 18px; font-weight: 700; color: #c5221f; }
.row.active .cnt { left: 13px; color: #c5221f; font-weight: 700; }
.row.active .row-ic { color: #e02020; }
.row.sub { padding-right: 41px; }
.row.sub .row-ic { margin-left: 20px; }
.row.cat { padding-right: 12px; }
.cat-caret { margin-left: 5px; border-width: 4px 4px 0; }
.side-div { height: 2px; background: #f1f1f1; margin-top: 5px; }
.hangouts { margin: 7px 0 0 18px; width: 239px; text-align: center; }
.signin { display: block; width: 100%; height: 34px; border: 0; border-radius: 2px; background: #0a84e8; color: #fff; font: 700 13px Roboto, "Liberation Sans", sans-serif; }
.hang-text { margin: 15px 0 0; font-size: 12px; line-height: 16.5px; color: #666; }
.hang-text a { color: #1a5ea8; text-decoration: none; }
.toast { position: absolute; z-index: 1; left: -17px; bottom: 0; width: 273px; height: 52px; background: #202124; border-radius: 4px 4px 0 0; display: flex; align-items: center; padding: 5px 28px 0 21px; justify-content: space-between; }
.toast-x { width: 14px; height: 14px; }
.toast-text { font-size: 14px; color: #eee; }

/* taskbar */
.taskbar { height: 40px; flex: none; background: #2b2d30; display: flex; align-items: stretch; color: #fff; }
.tb-sys { display: grid; grid-template-columns: repeat(3, 48px); width: 147px; align-items: center; justify-items: center; }
.tb-sys svg { width: 20px; height: 20px; }
.tb-apps { display: grid; grid-template-columns: repeat(12, 49px); }
.app { position: relative; display: flex; align-items: center; justify-content: center; }
.app svg { width: 24px; height: 24px; }
.app.open::after, .app.active::after { content: ""; position: absolute; left: 4px; right: 5px; bottom: 0; height: 3px; background: #72a9d8; }
.app.active { background: #56585b; }
.app.active::after { left: 0; right: 0; }
.app .app-badge { position: absolute; left: 24px; top: 14px; width: 18px; height: 18px; }
.chip-t { font: 700 6px "Liberation Sans", sans-serif; }
.tray { margin-left: auto; display: grid; grid-template-columns: 48px 24px 24px 22px 28px 22px 34px 74px 36px; padding-right: 11px; border-right: 1px solid #56585b; margin-right: 3px; align-items: center; justify-items: center; }
.tray svg { width: 20px; height: 20px; }
.tray-lang { font-size: 12px; color: #eee; }
.clock { font-size: 12px; line-height: 18px; text-align: center; color: #eee; }
```
